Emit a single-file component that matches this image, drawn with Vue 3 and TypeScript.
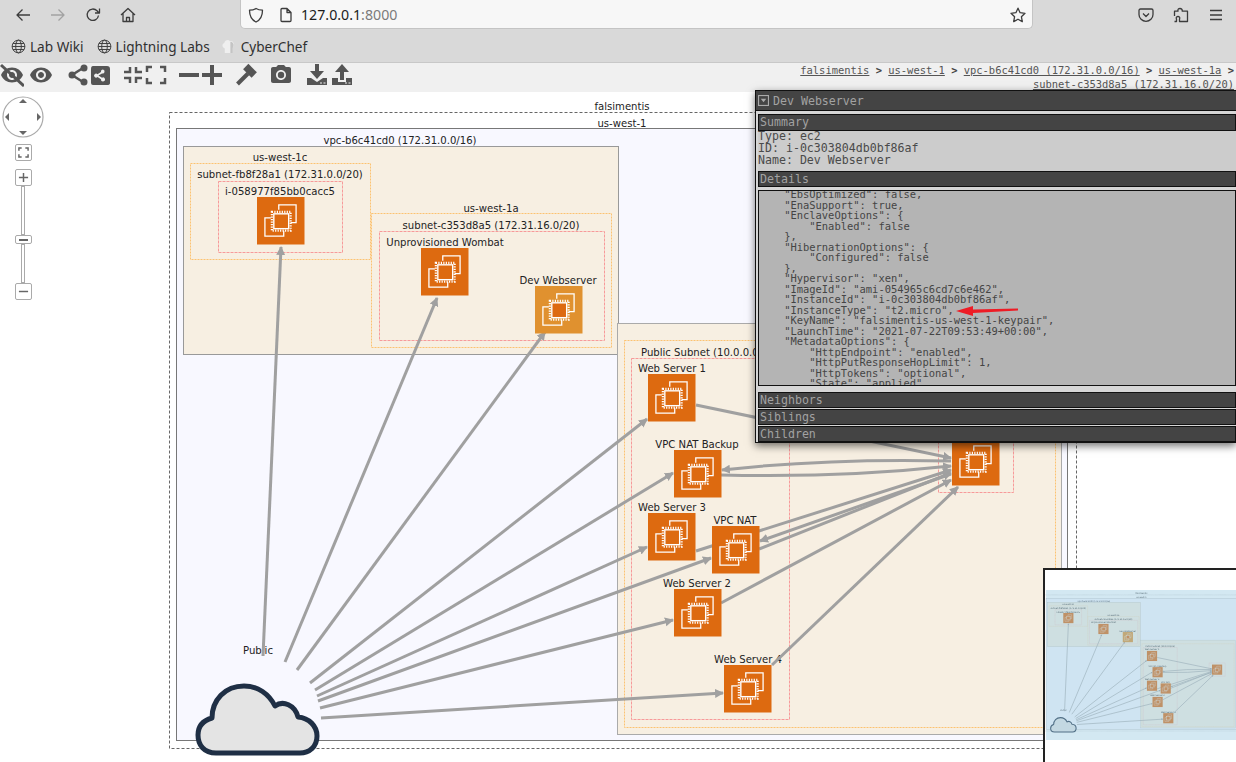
<script setup lang="ts">
interface Box { x: number; y: number; w: number; h: number; fill: string; stroke: string; dash: string }
interface Label { x: number; y: number; t: string; a?: string }
interface Node { x: number; y: number; light?: boolean }

const boxes: Box[] = [
  { x: 169.5, y: 112.5, w: 907, h: 636, fill: '#ffffff', stroke: '#666', dash: '3 2' },
  { x: 176.5, y: 128.5, w: 891, h: 612, fill: '#f8f8ff', stroke: '#777', dash: '' },
  { x: 183.5, y: 146.5, w: 435, h: 208, fill: '#f7efe2', stroke: '#999', dash: '' },
  { x: 617.5, y: 323.5, w: 444, h: 411, fill: '#f7efe2', stroke: '#aaa', dash: '' },
  { x: 190.5, y: 163.5, w: 180, h: 96, fill: '#f7efe2', stroke: '#fcc271', dash: '2 1' },
  { x: 218.5, y: 181.5, w: 124, h: 71, fill: '#f7efe2', stroke: '#f79a9a', dash: '3 1' },
  { x: 371.5, y: 213.5, w: 240, h: 134, fill: '#f7efe2', stroke: '#fcc271', dash: '2 1' },
  { x: 379.5, y: 231.5, w: 225, h: 109, fill: '#f7efe2', stroke: '#f79a9a', dash: '3 1' },
  { x: 624.5, y: 340.5, w: 431, h: 387, fill: '#f7efe2', stroke: '#fcc271', dash: '2 1' },
  { x: 631.5, y: 358.5, w: 158, h: 361, fill: '#f7efe2', stroke: '#f79a9a', dash: '3 1' },
  { x: 938.5, y: 430.5, w: 75, h: 62, fill: '#f7efe2', stroke: '#f79a9a', dash: '3 1' },
]

const labels: Label[] = [
  { x: 622, y: 110, t: 'falsimentis' },
  { x: 622, y: 127, t: 'us-west-1' },
  { x: 400, y: 144, t: 'vpc-b6c41cd0 (172.31.0.0/16)' },
  { x: 280, y: 161, t: 'us-west-1c' },
  { x: 280, y: 178, t: 'subnet-fb8f28a1 (172.31.0.0/20)' },
  { x: 280, y: 195, t: 'i-058977f85bb0cacc5' },
  { x: 491, y: 212, t: 'us-west-1a' },
  { x: 491, y: 229, t: 'subnet-c353d8a5 (172.31.16.0/20)' },
  { x: 445, y: 246, t: 'Unprovisioned Wombat' },
  { x: 558, y: 284, t: 'Dev Webserver' },
  { x: 641, y: 356, t: 'Public Subnet (10.0.0.0/24)', a: 'start' },
  { x: 672, y: 372, t: 'Web Server 1' },
  { x: 697, y: 448, t: 'VPC NAT Backup' },
  { x: 672, y: 511, t: 'Web Server 3' },
  { x: 735, y: 524, t: 'VPC NAT' },
  { x: 697, y: 587, t: 'Web Server 2' },
  { x: 748, y: 663, t: 'Web Server 4' },
  { x: 258, y: 654, t: 'Public' },
]

const nodes: Node[] = [
  { x: 257, y: 197 },
  { x: 421, y: 248 },
  { x: 535, y: 286, light: true },
  { x: 648, y: 374 },
  { x: 674, y: 450 },
  { x: 648, y: 513 },
  { x: 712, y: 526 },
  { x: 674, y: 589 },
  { x: 724, y: 665 },
  { x: 952, y: 438 },
]

const edges: string[] = [
  'M263 656 L281 247',
  'M285 662 L437 298',
  'M297 670 L545 332',
  'M310 683 L647 419',
  'M315 690 L673 473',
  'M317 696 L647 547',
  'M318 701 L711 558',
  'M320 708 L673 620',
  'M321 718 L723 693',
  'M696 405 L951 458',
  'M951 461 Q830 458 722 470',
  'M721 475 Q840 478 951 466',
  'M696 551 L951 470',
  'M759 549 L951 473',
  'M951 474 L760 541',
  'M721 603 L951 480',
  'M772 665 L958 487',
]

const details = `    "EbsOptimized": false,
    "EnaSupport": true,
    "EnclaveOptions": {
        "Enabled": false
    },
    "HibernationOptions": {
        "Configured": false
    },
    "Hypervisor": "xen",
    "ImageId": "ami-054965c6cd7c6e462",
    "InstanceId": "i-0c303804db0bf86af",
    "InstanceType": "t2.micro",
    "KeyName": "falsimentis-us-west-1-keypair",
    "LaunchTime": "2021-07-22T09:53:49+00:00",
    "MetadataOptions": {
        "HttpEndpoint": "enabled",
        "HttpPutResponseHopLimit": 1,
        "HttpTokens": "optional",
        "State": "applied"`

const crumbs: string[] = ['falsimentis', 'us-west-1', 'vpc-b6c41cd0 (172.31.0.0/16)', 'us-west-1a']
</script>

<template>
  <div class="page">
    <header class="nav">
      <svg class="nico" viewBox="0 0 16 16"><path d="M15 8H2M7.5 2.5L2 8l5.500 5.500" /></svg>
      <svg class="nico off" viewBox="0 0 16 16"><path d="M1 8h13M8.500 2.500L14 8l-5.500 5.500" /></svg>
      <svg class="nico" viewBox="0 0 16 16"><path d="M13.500 8.500A5.700 5.700 0 1 1 12 3.800L14 6M14.500 1.500V6H10" /></svg>
      <svg class="nico" viewBox="0 0 16 16"><path d="M1 8l7-6.500L15 8M3 6.500V14.500H13V6.500M6.500 14.500V10.500H9.500V14.500" /></svg>
      <div class="url">
        <svg class="nico" viewBox="0 0 16 16"><path d="M8 1.500C10 2.800 12 3.200 14.500 3.200C14.500 9 12.500 12.800 8 15C3.500 12.800 1.500 9 1.500 3.200C4 3.200 6 2.800 8 1.500Z" /></svg>
        <svg class="nico page-ico" viewBox="0 0 16 16"><path d="M3 2.500Q3 1.500 4 1.500H9L13 5.500V13.500Q13 14.500 12 14.500H4Q3 14.500 3 13.500ZM9 1.500V5.500H13" /></svg>
        <span class="addr">127.0.0.1<span class="port">:8000</span></span>
        <svg class="nico star" viewBox="0 0 16 16"><path d="M8 1.200L10.100 5.700L15 6.300L11.400 9.700L12.300 14.600L8 12.200L3.700 14.600L4.600 9.700L1 6.300L5.900 5.700Z" /></svg>
      </div>
      <div class="nav-right">
        <svg class="nico" viewBox="0 0 16 16"><path d="M2.500 2H13.500Q15 2 15 3.500V7.500A7 6.800 0 0 1 1 7.500V3.500Q1 2 2.500 2ZM5 6.500L8 9.500L11 6.500" /></svg>
        <svg class="nico" viewBox="0 0 16 16"><path d="M7 1.500C8.500 1.500 9.500 2.500 9.200 4.200H14.500V14.500H6.500V12C7.500 10.500 6 9.500 5 9.500C4 9.500 2.500 10.500 3.500 12V14.500H1.500M1.500 14.500" /><path d="M1.500 9V4.200H5C4.500 2.500 5.500 1.500 7 1.500" /></svg>
        <svg class="nico" viewBox="0 0 16 16"><path d="M2 3.500H14M2 8H14M2 12.500H14" /></svg>
      </div>
    </header>

    <nav class="bookmarks">
      <span class="bm">
        <svg class="globe" viewBox="0 0 16 16"><circle cx="8" cy="8" r="6.800" /><ellipse cx="8" cy="8" rx="3" ry="6.800" /><path d="M1.200 8H14.800M2.200 4.800H13.800M2.200 11.200H13.800" /></svg>
        Lab Wiki
      </span>
      <span class="bm">
        <svg class="globe" viewBox="0 0 16 16"><circle cx="8" cy="8" r="6.800" /><ellipse cx="8" cy="8" rx="3" ry="6.800" /><path d="M1.200 8H14.800M2.200 4.800H13.800M2.200 11.200H13.800" /></svg>
        Lightning Labs
      </span>
      <span class="bm chef">
        <svg class="hat" viewBox="0 0 16 16"><path d="M4 15V10C1 9 0.800 5 3.500 4.300C4 1 8 0 9.500 2.300C12.500 1.500 15.500 5 12.500 9.500V15Z" /><path class="hat-shade" d="M10 15V3C12.500 3 14.800 5.500 12.500 9.500V15Z" /></svg>
        CyberChef
      </span>
    </nav>

    <div class="toolbar">
      <div class="tools">
        <svg class="tool" viewBox="0 0 24 24"><path d="M12 4.500C7 4.500 2.730 7.610 1 12c1.730 4.390 6 7.500 11 7.500s9.270-3.110 11-7.500c-1.730-4.390-6-7.500-11-7.500zM12 17c-2.760 0-5-2.240-5-5s2.240-5 5-5 5 2.240 5 5-2.240 5-5 5zm0-8c-1.660 0-3 1.340-3 3s1.340 3 3 3 3-1.340 3-3-1.340-3-3-3z" /><path class="slash" d="M1 2L24 23" /></svg>
        <svg class="tool m5" viewBox="0 0 24 24"><path d="M12 4.500C7 4.500 2.730 7.610 1 12c1.730 4.390 6 7.500 11 7.500s9.270-3.110 11-7.500c-1.730-4.390-6-7.500-11-7.500zM12 17c-2.760 0-5-2.240-5-5s2.240-5 5-5 5 2.240 5 5-2.240 5-5 5zm0-8c-1.660 0-3 1.340-3 3s1.340 3 3 3 3-1.340 3-3-1.340-3-3-3z" /></svg>
        <svg class="tool m13" viewBox="0 0 24 24"><path class="slash thin" d="M17 5L6 12L17 19" /><circle cx="18" cy="5" r="3.500" /><circle cx="6" cy="12" r="3.500" /><circle cx="18" cy="19" r="3.500" /></svg>
        <svg class="tool mn2" viewBox="0 0 24 24"><path d="M5 3H19Q22 3 22 6V20Q22 22 19 22H5Q3 22 3 20V6Q3 3 5 3ZM15 6.500A2 2 0 0 0 13 9L9.500 11.200A2 2 0 1 0 9.500 14L13 16.200A2 2 0 1 0 14 14.700L10.500 12.600L14 10.500A2 2 0 1 0 15 6.500Z" fill-rule="evenodd" /></svg>
        <svg class="tool m9 lines" viewBox="0 0 24 24"><path d="M9 4V9H3M15 4V9H21M9 20V15H3M15 20V15H21" /></svg>
        <svg class="tool mn1 lines" viewBox="0 0 24 24"><path d="M3 9V4H8M16 4H21V9M3 15V20H8M16 20H21V15" /></svg>
        <svg class="tool m9" viewBox="0 0 24 24"><rect x="2" y="10" width="20" height="4" /></svg>
        <svg class="tool mn1" viewBox="0 0 24 24"><path d="M2 10H10V2H14V10H22V14H14V22H10V14H2Z" /></svg>
        <svg class="tool m10" viewBox="0 0 24 24"><rect x="10" y="4" width="12" height="7.500" transform="rotate(45 16 7.750)" /><path class="slash wide" d="M14 10.500L3.500 21" /></svg>
        <svg class="tool m11" viewBox="0 0 24 24"><circle cx="12" cy="12" r="3.200" /><path d="M9 2L7.170 4H4c-1.100 0-2 .9-2 2v12c0 1.100.9 2 2 2h16c1.100 0 2-.9 2-2V6c0-1.100-.9-2-2-2h-3.170L15 2H9zm3 15c-2.760 0-5-2.240-5-5s2.240-5 5-5 5 2.240 5 5-2.240 5-5 5z" /></svg>
        <svg class="tool m12" viewBox="0 0 24 24"><path d="M10 1H14V8H19L12 16L5 8H10ZM2 15H6L12 19L18 15H22V22H2ZM15 19.500V20.500H17V19.500ZM18.500 19.500V20.500H20.500V19.500Z" fill-rule="evenodd" /></svg>
        <svg class="tool m1" viewBox="0 0 24 24"><path d="M10 17H14V9H19L12 1L5 9H10ZM2 15H8V19H16V15H22V22H2ZM15 19.500V20.500H17V19.500ZM18.500 19.500V20.500H20.500V19.500Z" fill-rule="evenodd" /></svg>
      </div>
      <div class="crumbs">
        <template v-for="c in crumbs" :key="c"><a>{{ c }}</a>{{ ' ' }}<b>&gt;</b>{{ ' ' }}</template><a>subnet-c353d8a5 (172.31.16.0/20)</a>
      </div>
    </div>

    <main class="canvas">
      <svg class="diagram" viewBox="0 92 1236 670" width="1236" height="670">
        <defs>
          <marker id="arrow" markerUnits="userSpaceOnUse" markerWidth="10" markerHeight="10" refX="8" refY="4.500" orient="auto">
            <path d="M0 0L9 4.500L0 9Z" fill="#a0a0a0" />
          </marker>
          <symbol id="ec2" viewBox="0 0 48 48">
            <path d="M22 13V8H39.500V26H34M14 21H8V39.500H27V34" fill="none" stroke="#fff" stroke-width="1.300" />
            <rect x="15" y="15" width="19" height="19" fill="none" stroke="#fff" stroke-width="2.200" stroke-dasharray="1.200 1.300" />
            <rect x="17" y="17" width="15" height="15" fill="#dd6a10" stroke="#fff" stroke-width="1.400" />
          </symbol>
          <g id="world">
            <rect v-for="(b, i) in boxes" :key="'b' + i" :x="b.x" :y="b.y" :width="b.w" :height="b.h" :fill="b.fill" :stroke="b.stroke" :stroke-dasharray="b.dash" />
            <text v-for="l in labels" :key="l.t" :x="l.x" :y="l.y" :text-anchor="l.a || 'middle'" font-family="'DejaVu Sans', sans-serif" font-size="10.100" fill="#222">{{ l.t }}</text>
            <path v-for="(e, i) in edges" :key="'e' + i" :d="e" fill="none" stroke="#a0a0a0" stroke-width="3" marker-end="url(#arrow)" />
            <g v-for="n in nodes" :key="n.x + '-' + n.y">
              <rect :x="n.x" :y="n.y" width="47.500" height="47.500" :fill="n.light ? '#e0912f' : '#dd6a10'" />
              <use href="#ec2" :x="n.x" :y="n.y" width="47.500" height="47.500" />
            </g>
            <path d="M216 753C204 753 198 745 198 735C198 725 205 720 212 718C212 700 225 686 244 686C258 686 269 694 275 706C283 700 295 705 298 717C309 718 317 726 317 736C317 747 309 753 300 753Z" fill="#e4e4e4" stroke="#1f2f45" stroke-width="5" stroke-linejoin="round" />
          </g>
        </defs>
        <use href="#world" />
      </svg>

      <div class="pan-zoom">
        <svg class="dial" viewBox="0 0 42 42">
          <circle cx="21" cy="21" r="20" />
          <path d="M21 3L25 7H17ZM21 39L25 35H17ZM3 21L7 17V25ZM39 21L35 17V25Z" class="tri" />
        </svg>
        <button class="zbtn fit" type="button">
          <svg viewBox="0 0 12 12"><path d="M1 4V1H4M8 1H11V4M1 8V11H4M8 11H11V8" /></svg>
        </button>
        <button class="zbtn" type="button"><svg viewBox="0 0 12 12"><path d="M1 6H11M6 1V11" /></svg></button>
        <div class="rail">
          <div class="rail-top"></div>
          <div class="handle"><span></span></div>
          <div class="rail-bottom"></div>
        </div>
        <button class="zbtn" type="button"><svg viewBox="0 0 12 12"><path d="M1 6H11" /></svg></button>
      </div>

      <aside class="panel">
        <div class="title">
          <svg class="collapse" viewBox="0 0 10 10"><rect x="0.500" y="0.500" width="9" height="9" /><path d="M2.500 3.500H7.500L5 6.500Z" /></svg>
          Dev Webserver
        </div>
        <div class="bar summary-bar">Summary</div>
        <div class="summary"><span class="summary-text">Type: ec2<br />ID: i-0c303804db0bf86af<br />Name: Dev Webserver</span></div>
        <div class="bar details-bar">Details</div>
        <div class="scrollbox">
          <pre class="json">{{ details }}</pre>
          <svg class="pointer" viewBox="0 0 64 12"><path d="M0 6L17 1V4.500L62 3.500V5.500L17 8V11Z" fill="#ee1c25" /></svg>
        </div>
        <div class="bar gap-bar">Neighbors</div>
        <div class="bar tight">Siblings</div>
        <div class="bar tight">Children</div>
      </aside>

      <div class="minimap">
        <svg class="mini-svg" viewBox="0 0 193 194" width="193" height="194">
          <g transform="translate(7 149) scale(0.214) translate(-195 -683)">
            <use href="#world" />
          </g>
          <rect class="mini-view" x="3" y="22" width="190" height="150" />
        </svg>
      </div>
    </main>
  </div>
</template>

<style scoped>
.page {
  width: 1236px;
  height: 762px;
  overflow: hidden;
  display: flex;
  flex-direction: column;
  background: #fff;
  font-family: "Noto Sans", sans-serif;
}
.nav {
  height: 31px;
  flex: none;
  background: #d9d9d9;
  display: flex;
  align-items: flex-start;
  padding-left: 15px;
  gap: 19px;
  box-sizing: border-box;
}
.nico {
  width: 16px;
  height: 16px;
  flex: none;
  margin-top: 7px;
  fill: none;
  stroke: #3c3c3c;
  stroke-width: 1.300;
  stroke-linejoin: round;
}
.nico.off {
  stroke: #a2a2a2;
}
.url {
  width: 793px;
  height: 29px;
  margin-left: 85px;
  background: #f7f7f7;
  border: 1px solid #c4c4c4;
  border-top: none;
  border-radius: 0 0 5px 5px;
  box-sizing: border-box;
  display: flex;
  align-items: flex-start;
  padding-left: 7px;
}
.page-ico {
  margin-left: 14px;
}
.addr {
  margin-left: 7px;
  margin-top: 5px;
  font-size: 14.200px;
  line-height: 20px;
  color: #1c1c1c;
}
.port {
  color: #7b7b7b;
}
.star {
  margin-left: auto;
  margin-right: 6px;
}
.nav-right {
  display: flex;
  gap: 19px;
  margin-left: 86px;
}
.bookmarks {
  height: 32px;
  flex: none;
  background: #d9d9d9;
  border-bottom: 1px solid #c8c8c8;
  box-sizing: border-box;
  display: flex;
  align-items: center;
  padding-left: 11px;
  gap: 13px;
  font-size: 13.600px;
  color: #303030;
}
.bm {
  display: flex;
  align-items: center;
  gap: 4px;
  white-space: nowrap;
}
.chef {
  gap: 5px;
  margin-left: -2px;
}
.globe {
  width: 15px;
  height: 15px;
  fill: none;
  stroke: #3a3a3a;
  stroke-width: 1;
}
.hat {
  width: 15px;
  height: 15px;
  fill: #efefef;
}
.hat-shade {
  fill: #c4c4c4;
}
.toolbar {
  height: 29px;
  flex: none;
  background: #f0f0f0;
  display: flex;
  justify-content: space-between;
  position: relative;
  z-index: 1;
}
.tools {
  display: flex;
  align-items: center;
  height: 24px;
}
.tool {
  width: 24px;
  height: 24px;
  flex: none;
  fill: #555;
}
.slash {
  fill: none;
  stroke: #555;
  stroke-width: 3;
}
.thin {
  stroke-width: 2.500;
}
.wide {
  stroke-width: 4;
}
.lines {
  fill: none;
  stroke: #555;
  stroke-width: 2.500;
}
.m1 { margin-left: 1px; }
.m5 { margin-left: 5px; }
.m9 { margin-left: 9px; }
.m10 { margin-left: 10px; }
.m11 { margin-left: 11px; }
.m12 { margin-left: 12px; }
.m13 { margin-left: 13px; }
.mn1 { margin-left: -1px; }
.mn2 { margin-left: -2px; }
.crumbs {
  width: 450px;
  padding-right: 2px;
  text-align: right;
  font-family: "DejaVu Sans Mono", monospace;
  font-size: 10.450px;
  line-height: 14px;
  color: #555;
}
.crumbs a {
  text-decoration: underline;
}
.crumbs b {
  color: #444;
}
.canvas {
  flex: 1;
  position: relative;
}
.diagram {
  display: block;
}
.pan-zoom {
  position: absolute;
  left: 2px;
  top: 4px;
  width: 42px;
  display: flex;
  flex-direction: column;
  align-items: center;
}
.dial {
  width: 42px;
  height: 42px;
  fill: #fff;
  stroke: #aaa;
  stroke-width: 1.200;
}
.tri {
  fill: #666;
  stroke: none;
}
.zbtn {
  width: 17px;
  height: 17px;
  padding: 2px;
  background: #fff;
  border: 1px solid #aaa;
  border-radius: 2px;
  box-sizing: border-box;
  display: block;
}
.zbtn svg {
  display: block;
  width: 11px;
  height: 11px;
  fill: none;
  stroke: #666;
  stroke-width: 1.600;
}
.fit {
  margin: 6px 0 8px;
}
.rail {
  width: 17px;
  height: 97px;
  display: flex;
  flex-direction: column;
  align-items: center;
}
.rail-top,
.rail-bottom {
  width: 4px;
  box-sizing: border-box;
  border: 1px solid #aaa;
  background: #fff;
}
.rail-top {
  height: 49px;
}
.rail-bottom {
  flex: 1;
}
.handle {
  width: 17px;
  height: 9px;
  background: #fff;
  border: 1px solid #aaa;
  border-radius: 2px;
  box-sizing: border-box;
  display: flex;
  align-items: center;
  justify-content: center;
}
.handle span {
  width: 9px;
  height: 2px;
  background: #666;
}
.panel {
  position: absolute;
  left: 755px;
  top: -2px;
  width: 481px;
  height: 353px;
  box-sizing: border-box;
  background: #d6d6d6;
  border: 1px solid #111;
  border-right: none;
  box-shadow: 0 3px 8px rgba(0, 0, 0, 0.55);
  font-family: "DejaVu Sans Mono", monospace;
  color: #4a4a4a;
  z-index: 2;
}
.title {
  height: 19px;
  background: #444;
  border-bottom: 1px solid #111;
  color: #a2a2a2;
  font-size: 11.600px;
  line-height: 18px;
  display: flex;
  align-items: center;
  gap: 4px;
  padding-left: 2px;
}
.collapse {
  width: 11px;
  height: 11px;
  fill: none;
  stroke: #aaa;
}
.collapse path {
  fill: #aaa;
  stroke: none;
}
.bar {
  height: 17px;
  margin-left: 2px;
  box-sizing: border-box;
  background: #444;
  border: 1px solid #111;
  color: #a2a2a2;
  font-size: 11.600px;
  line-height: 15px;
  padding-left: 1px;
}
.summary-bar {
  margin-top: 3px;
}
.summary {
  height: 40px;
  margin-left: 2px;
  background: #cccccc;
  font-size: 11.600px;
  line-height: 12px;
  color: #4a4a4a;
}
.summary-text {
  display: block;
  transform: translateY(-1px);
}
.details-bar {
  height: 16px;
  line-height: 15px;
}
.scrollbox {
  position: relative;
  height: 196px;
  margin: 3px 0 0 2px;
  background: #b4b4b4;
  border: 1px solid #111;
  box-sizing: border-box;
  overflow: hidden;
}
.json {
  margin: -2px 0 0 0;
  font-family: inherit;
  font-size: 10.450px;
  line-height: 10.500px;
  color: #454545;
}
.pointer {
  position: absolute;
  left: 197px;
  top: 114px;
  width: 64px;
  height: 12px;
}
.gap-bar,
.tight {
  height: 16px;
  line-height: 14px;
}
.gap-bar {
  margin-top: 6px;
}
.tight {
  margin-top: 1px;
}
.minimap {
  position: absolute;
  left: 1043px;
  top: 476px;
  width: 193px;
  height: 194px;
  box-sizing: border-box;
  background: #fff;
  border-top: 2px solid #222;
  border-left: 2px solid #222;
  overflow: hidden;
  z-index: 3;
}
.mini-svg {
  display: block;
  margin: -2px 0 0 -2px;
  filter: blur(0.4px);
}
.mini-view {
  fill: rgba(150, 200, 225, 0.42);
}
</style>

<style>
html,
body {
  margin: 0;
  overflow: hidden;
}
</style>
